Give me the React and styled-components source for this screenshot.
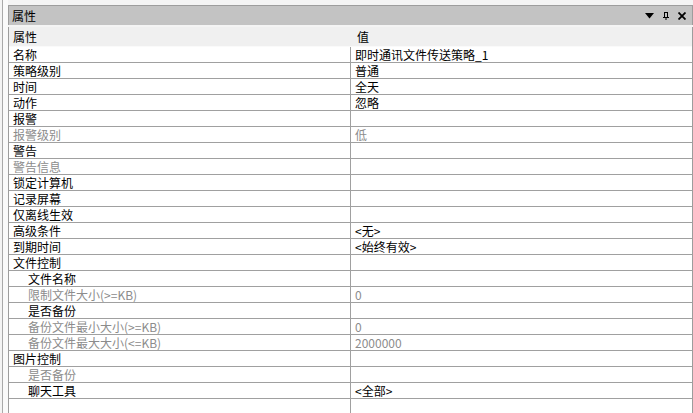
import React from 'react';
import styled, { createGlobalStyle } from 'styled-components';

const GlobalStyle = createGlobalStyle`
  html, body {
    margin: 0;
    padding: 0;
    height: 413px;
    overflow: hidden;
    background: #f4f4f4;
    font-family: "Noto Sans CJK SC", "Liberation Sans", sans-serif;
    font-size: 12px;
    color: #000;
  }
  #root {
    height: 100%;
  }
`;

const StyledWindow = styled.div`
  display: flex;
  height: 413px;
  width: 693px;
`;

const LeftStrip = styled.div`
  width: 5px;
  margin-left: 2px;
  border-left: 1px solid #a9a9a9;
  background: #fafafa;
`;

const StyledPanel = styled.div`
  flex: 1;
  display: flex;
  flex-direction: column;
  padding-top: 5px;
  min-width: 0;
`;

const TitleBar = styled.div`
  display: flex;
  align-items: center;
  height: 19px;
  padding: 0 6px 0 3px;
  background: #c3c3c3;
  border-top: 1px solid #9d9d9d;
  border-left: 1px solid #9d9d9d;
  border-right: 1px solid #9d9d9d;
  line-height: 19px;
`;

const TitleText = styled.span`
  flex: 1;
`;

const TitleButtons = styled.div`
  display: flex;
  align-items: center;
  gap: 8px;
`;

const Grid = styled.div`
  flex: 1;
  display: flex;
  flex-direction: column;
  margin-top: 2px;
  background: #fff;
  border-left: 1px solid #9d9d9d;
  border-right: 1px solid #9d9d9d;
`;

const HeaderRow = styled.div`
  display: flex;
  height: 19px;
  line-height: 19px;
  background: #f0f0f0;
  border-bottom: 1px solid #fafafa;
`;

const HeaderCell = styled.div`
  width: ${({ first }) => (first ? '341px' : 'auto')};
  flex: ${({ first }) => (first ? 'none' : '1')};
  padding-left: ${({ first }) => (first ? '4px' : '6px')};
  box-sizing: border-box;
  margin-right: ${({ first }) => (first ? '1px' : '0')};
`;

const Row = styled.div`
  display: flex;
  height: 16px;
  box-sizing: border-box;
  border-bottom: 1px solid #a0a0a0;
  line-height: 15px;
  color: ${({ disabled }) => (disabled ? '#8c8c8c' : '#000')};
`;

const NameCell = styled.div`
  width: 342px;
  box-sizing: border-box;
  padding-left: ${({ indent }) => (indent ? '19px' : '4px')};
  border-right: 1px solid #a0a0a0;
  white-space: nowrap;
  overflow: hidden;
`;

const ValueCell = styled.div`
  flex: 1;
  padding-left: 4px;
  white-space: nowrap;
  overflow: hidden;
`;

const Filler = styled.div`
  flex: 1;
  display: flex;
`;

const FillerCell = styled.div`
  width: 342px;
  box-sizing: border-box;
  border-right: 1px solid #a0a0a0;
`;

const DropIcon = () => (
  <svg width="9" height="6" viewBox="0 0 9 6">
    <path d="M0 0H9L4.5 5.5Z" fill="#000" />
  </svg>
);

const PinIcon = () => (
  <svg width="8" height="8" viewBox="0 0 8 8">
    <path d="M2 0H6V5H7V6H4.5V8H3.5V6H1V5H2Z M3 1V5H5V1Z" fill="#000" fillRule="evenodd" />
  </svg>
);

const CloseIcon = () => (
  <svg width="8" height="8" viewBox="0 0 8 8">
    <path d="M0.5 0.5L7.5 7.5M7.5 0.5L0.5 7.5" stroke="#000" strokeWidth="1.8" />
  </svg>
);

const rows = [
  { name: '名称', value: '即时通讯文件传送策略_1' },
  { name: '策略级别', value: '普通' },
  { name: '时间', value: '全天' },
  { name: '动作', value: '忽略' },
  { name: '报警' },
  { name: '报警级别', value: '低', disabled: true },
  { name: '警告' },
  { name: '警告信息', disabled: true },
  { name: '锁定计算机' },
  { name: '记录屏幕' },
  { name: '仅离线生效' },
  { name: '高级条件', value: '<无>' },
  { name: '到期时间', value: '<始终有效>' },
  { name: '文件控制' },
  { name: '文件名称', indent: true },
  { name: '限制文件大小(>=KB)', value: '0', indent: true, disabled: true },
  { name: '是否备份', indent: true },
  { name: '备份文件最小大小(>=KB)', value: '0', indent: true, disabled: true },
  { name: '备份文件最大大小(<=KB)', value: '2000000', indent: true, disabled: true },
  { name: '图片控制' },
  { name: '是否备份', indent: true, disabled: true },
  { name: '聊天工具', value: '<全部>', indent: true },
];

const App = () => (
  <>
    <GlobalStyle />
    <StyledWindow>
      <LeftStrip />
      <StyledPanel>
        <TitleBar>
          <TitleText>属性</TitleText>
          <TitleButtons>
            <DropIcon />
            <PinIcon />
            <CloseIcon />
          </TitleButtons>
        </TitleBar>
        <Grid>
          <HeaderRow>
            <HeaderCell first>属性</HeaderCell>
            <HeaderCell>值</HeaderCell>
          </HeaderRow>
          {rows.map((row, i) => (
            <Row key={i} disabled={row.disabled}>
              <NameCell indent={row.indent}>{row.name}</NameCell>
              <ValueCell>{row.value}</ValueCell>
            </Row>
          ))}
          <Filler>
            <FillerCell />
          </Filler>
        </Grid>
      </StyledPanel>
    </StyledWindow>
  </>
);

export default App;
